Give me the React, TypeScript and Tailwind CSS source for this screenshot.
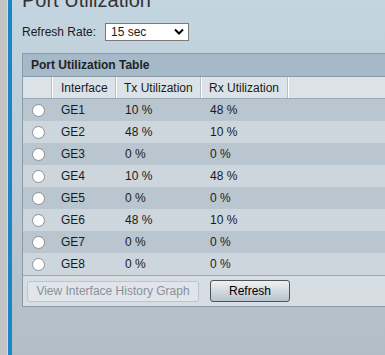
import React from "react";

const rows = [
  ["GE1", "10 %", "48 %"],
  ["GE2", "48 %", "10 %"],
  ["GE3", "0 %", "0 %"],
  ["GE4", "10 %", "48 %"],
  ["GE5", "0 %", "0 %"],
  ["GE6", "48 %", "10 %"],
  ["GE7", "0 %", "0 %"],
  ["GE8", "0 %", "0 %"],
];

export default function App() {
  return (
    <div
      className="flex h-[355px] w-[385px] overflow-hidden text-[12px] text-[#1a1a1a]"
      style={{ fontFamily: '"Liberation Sans", Arial, sans-serif' }}
    >
      <div className="w-[7px] shrink-0 bg-[#c4c4c4]" />
      <div className="w-px shrink-0 bg-[#dcdcdc]" />
      <div className="w-[4px] shrink-0 bg-[#1b86c6]" />
      <div className="flex-1 min-w-0 bg-gradient-to-b from-[#c3d5e0] via-[#bccbd6] to-[#b3bdc5] pl-[10px]">
        <div className="-mt-[12px] h-[21px] text-[20px] leading-[24px] text-[#333] whitespace-nowrap">
          Port Utilization
        </div>
        <div className="mt-[13px] flex items-center h-[19px]">
          <span className="w-[83px]">Refresh Rate:</span>
          <div className="flex h-[18px] w-[84px] items-center justify-between border border-[#7a7a7a] bg-white pl-[5px] pr-[4px]">
            <span className="text-[12px]">15 sec</span>
            <svg width="10" height="7" viewBox="0 0 10 7">
              <path d="M1 1.5 L5 5.5 L9 1.5" fill="none" stroke="#000" strokeWidth="2" />
            </svg>
          </div>
        </div>
        <div className="mt-[12px] w-[420px] border border-[#8a9ba8]">
          <div className="flex h-[23px] items-center bg-[#a5b9c9] pl-[8px] font-bold text-[12px] text-[#222] border-b border-[#8a9ba8]">
            Port Utilization Table
          </div>
          <div className="flex h-[22px] items-center bg-[#dbe3e9] border-b border-[#9aa9b4]">
            <div className="w-[29px] h-full border-r border-[#b5c0c8]" />
            <div className="w-[64px] h-full flex items-center pl-[8px] border-r border-[#b5c0c8] border-l border-l-white">Interface</div>
            <div className="w-[85px] h-full flex items-center pl-[7px] border-r border-[#b5c0c8] border-l border-l-white">Tx Utilization</div>
            <div className="w-[87px] h-full flex items-center pl-[7px] border-r border-[#b5c0c8] border-l border-l-white">Rx Utilization</div>
            <div className="flex-1 h-full border-l border-l-white" />
          </div>
          {rows.map((r, i) => (
            <div
              key={r[0]}
              className={`flex h-[22px] items-center ${i % 2 === 0 ? "bg-[#b9c6d0]" : "bg-[#cdd6dd]"}`}
            >
              <div className="w-[30px] flex justify-center">
                <div className="h-[13px] w-[13px] rounded-full border border-[#8e8e8e] bg-white" />
              </div>
              <div className="w-[64px] pl-[8px]">{r[0]}</div>
              <div className="w-[85px] pl-[8px]">{r[1]}</div>
              <div className="w-[87px] pl-[8px]">{r[2]}</div>
            </div>
          ))}
          <div className="flex h-[31px] items-center gap-[11px] bg-[#d6dee4] border-t border-[#9aa9b4] pl-[4px]">
            <div className="flex h-[21px] w-[172px] items-center justify-center rounded-[3px] border border-[#bcc5cc] bg-[#dfe5ea] text-[#8b9197]">
              View Interface History Graph
            </div>
            <div className="flex h-[22px] w-[80px] items-center justify-center rounded-[3px] border border-[#4f5458] bg-gradient-to-b from-[#eef1f3] to-[#b9c3cb] text-black">
              Refresh
            </div>
          </div>
        </div>
      </div>
    </div>
  );
}
